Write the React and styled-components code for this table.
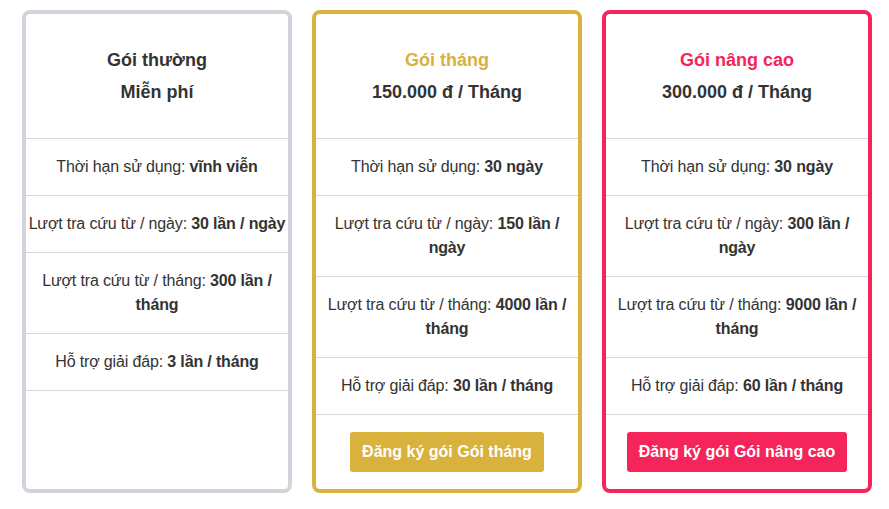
import React from "react";
import styled, { createGlobalStyle } from "styled-components";

const plans = [
  {
    name: "Gói thường",
    price: "Miễn phí",
    tone: "plain",
    rows: [
      ["Thời hạn sử dụng:", "vĩnh viễn"],
      ["Lượt tra cứu từ / ngày:", "30 lần / ngày"],
      ["Lượt tra cứu từ / tháng:", "300 lần / tháng"],
      ["Hỗ trợ giải đáp:", "3 lần / tháng"],
    ],
  },
  {
    name: "Gói tháng",
    price: "150.000 đ / Tháng",
    tone: "gold",
    rows: [
      ["Thời hạn sử dụng:", "30 ngày"],
      ["Lượt tra cứu từ / ngày:", "150 lần / ngày"],
      ["Lượt tra cứu từ / tháng:", "4000 lần / tháng"],
      ["Hỗ trợ giải đáp:", "30 lần / tháng"],
    ],
  },
  {
    name: "Gói nâng cao",
    price: "300.000 đ / Tháng",
    tone: "red",
    rows: [
      ["Thời hạn sử dụng:", "30 ngày"],
      ["Lượt tra cứu từ / ngày:", "300 lần / ngày"],
      ["Lượt tra cứu từ / tháng:", "9000 lần / tháng"],
      ["Hỗ trợ giải đáp:", "60 lần / tháng"],
    ],
  },
];

const tones = {
  plain: { border: "#d3d3db", title: "#333333" },
  gold: { border: "#d9b13d", title: "#d9b13d" },
  red: { border: "#f5245a", title: "#f5245a" },
};

function App() {
  return (
    <>
      <GlobalStyle />
      <Wrap>
        {plans.map((p) => (
          <Card key={p.name} $tone={p.tone}>
            <Header>
              <Name $tone={p.tone}>{p.name}</Name>
              <Price>{p.price}</Price>
            </Header>
            {p.rows.map(([label, value]) => (
              <Row key={label}>
                {label} <b>{value}</b>
              </Row>
            ))}
            {p.tone !== "plain" && (
              <Footer>
                <Btn $tone={p.tone}>Đăng ký gói {p.name}</Btn>
              </Footer>
            )}
          </Card>
        ))}
      </Wrap>
    </>
  );
}

export default App;

const GlobalStyle = createGlobalStyle`
  body {
    margin: 0;
    background: #ffffff;
    font-family: "Liberation Sans", Arial, sans-serif;
    color: #333333;
  }
`;

const Wrap = styled.div`
  display: flex;
  align-items: stretch;
  gap: 20px;
  padding: 10px 0 0 22px;
`;

const Card = styled.div`
  width: 270px;
  box-sizing: border-box;
  height: 483px;
  border: 4px solid ${(p) => tones[p.$tone].border};
  border-radius: 8px;
  display: flex;
  flex-direction: column;
  background: #fff;
`;

const Header = styled.div`
  padding: 32px 0;
  text-align: center;
  border-bottom: 1px solid #d6d6de;
`;

const Name = styled.h3`
  margin: 0 0 4px;
  font-size: 18px;
  line-height: 28px;
  font-weight: bold;
  color: ${(p) => tones[p.$tone].title};
`;

const Price = styled.div`
  font-size: 18px;
  line-height: 28px;
  font-weight: bold;
`;

const Row = styled.div`
  padding: 16px 0;
  font-size: 16px;
  line-height: 24px;
  letter-spacing: -0.15px;
  text-align: center;
  border-bottom: 1px solid #d6d6de;
  b {
    font-weight: bold;
  }
`;

const Footer = styled.div`
  display: flex;
  justify-content: center;
  padding: 17px 0;
`;

const Btn = styled.button`
  border: none;
  border-radius: 3px;
  background: ${(p) => tones[p.$tone].border};
  color: #ffffff;
  font-family: "Liberation Sans", Arial, sans-serif;
  font-size: 16px;
  font-weight: bold;
  height: 40px;
  padding: 0 12px;
  cursor: pointer;
`;
